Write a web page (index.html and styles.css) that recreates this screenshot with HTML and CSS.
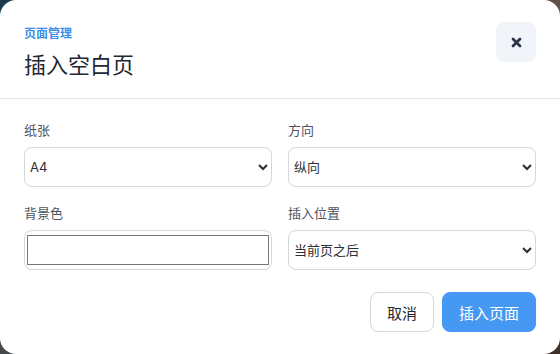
FILE: index.html
```html
<!DOCTYPE html>
<html lang="zh-CN">
<head>
    <meta charset="UTF-8">
    <meta name="viewport" content="width=device-width, initial-scale=1.0">
    <title>插入空白页</title>
    <link rel="stylesheet" href="styles.css">
</head>
<body>
    <div class="dialog">
        <!-- Kopfbereich -->
        <div class="dialog-header">
            <div class="titles">
                <div class="eyebrow">页面管理</div>
                <h1>插入空白页</h1>
            </div>
            <button class="close-btn" aria-label="关闭">
                <svg width="11" height="11" viewBox="0 0 12 12">
                    <path d="M2.2 2.2 L9.8 9.8 M9.8 2.2 L2.2 9.8" stroke="#2b3447" stroke-width="3" stroke-linecap="round"/>
                </svg>
            </button>
        </div>

        <!-- Formular -->
        <div class="dialog-body">
            <div class="field">
                <label for="paper">纸张</label>
                <select id="paper">
                    <option>A4</option>
                    <option>A3</option>
                    <option>Letter</option>
                </select>
            </div>
            <div class="field">
                <label for="orient">方向</label>
                <select id="orient">
                    <option>纵向</option>
                    <option>横向</option>
                </select>
            </div>
            <div class="field">
                <label for="bg">背景色</label>
                <input type="color" id="bg" value="#ffffff">
            </div>
            <div class="field">
                <label for="pos">插入位置</label>
                <select id="pos">
                    <option>当前页之后</option>
                    <option>当前页之前</option>
                    <option>文档末尾</option>
                </select>
            </div>
        </div>

        <!-- Buttons -->
        <div class="dialog-footer">
            <button class="btn btn-cancel">取消</button>
            <button class="btn btn-primary">插入页面</button>
        </div>
    </div>
</body>
</html>
```

FILE: styles.css
```css
/* Seite mit unscharfem Hintergrund */
body {
    margin: 0;
    width: 560px;
    height: 354px;
    overflow: hidden;
    font-family: "Inter", "Noto Sans CJK SC", sans-serif;
    background:
        linear-gradient(135deg, #1c3a4e 0%, #4a4c4c 45%, #6e5342 70%, #3e3029 100%);
}

/* Dialogfenster */
.dialog {
    width: 560px;
    height: 354px;
    box-sizing: border-box;
    background-color: #fff;
    border-radius: 16px;
    display: flex;
    flex-direction: column;
}

.dialog-header {
    display: flex;
    justify-content: space-between;
    align-items: flex-start;
    padding: 22px 24px 20px;
    border-bottom: 1px solid #e3e7ea;
}

.titles {
    padding-top: 4px;
}

.eyebrow {
    font-size: 12px;
    line-height: 16px;
    font-weight: 600;
    color: #3a8ee6;
    margin-bottom: 10px;
}

h1 {
    margin: 0;
    font-size: 22px;
    line-height: 26px;
    font-weight: 400;
    color: #1f2733;
}

.close-btn {
    width: 40px;
    height: 40px;
    border: none;
    border-radius: 8px;
    background-color: #f1f4f8;
    display: flex;
    align-items: center;
    justify-content: center;
    padding: 0;
    cursor: pointer;
}

/* Formularraster */
.dialog-body {
    display: grid;
    grid-template-columns: 1fr 1fr;
    column-gap: 16px;
    row-gap: 16px;
    padding: 21px 24px 0;
}

.field label {
    display: block;
    font-size: 13px;
    line-height: 20px;
    color: #4b5563;
    margin-bottom: 7px;
}

.field select,
.field input {
    width: 100%;
    height: 40px;
    box-sizing: border-box;
    border: 1px solid #d4d8dd;
    border-radius: 8px;
    background-color: #fff;
    font-family: inherit;
    font-size: 13px;
    color: #2a2f36;
    padding: 0 1px;
}

.field input[type="color"] {
    padding: 0;
    cursor: pointer;
}

/* Fußzeile */
.dialog-footer {
    display: flex;
    justify-content: flex-end;
    gap: 8px;
    padding: 22px 24px 0;
}

.btn {
    height: 40px;
    padding: 0 16px;
    border-radius: 8px;
    font-family: inherit;
    font-size: 15px;
    cursor: pointer;
}

.btn-cancel {
    background-color: #fff;
    border: 1px solid #d4d8dd;
    color: #1f2733;
}

.btn-primary {
    background-color: #4599f2;
    border: 1px solid #4599f2;
    color: #fff;
}
```
